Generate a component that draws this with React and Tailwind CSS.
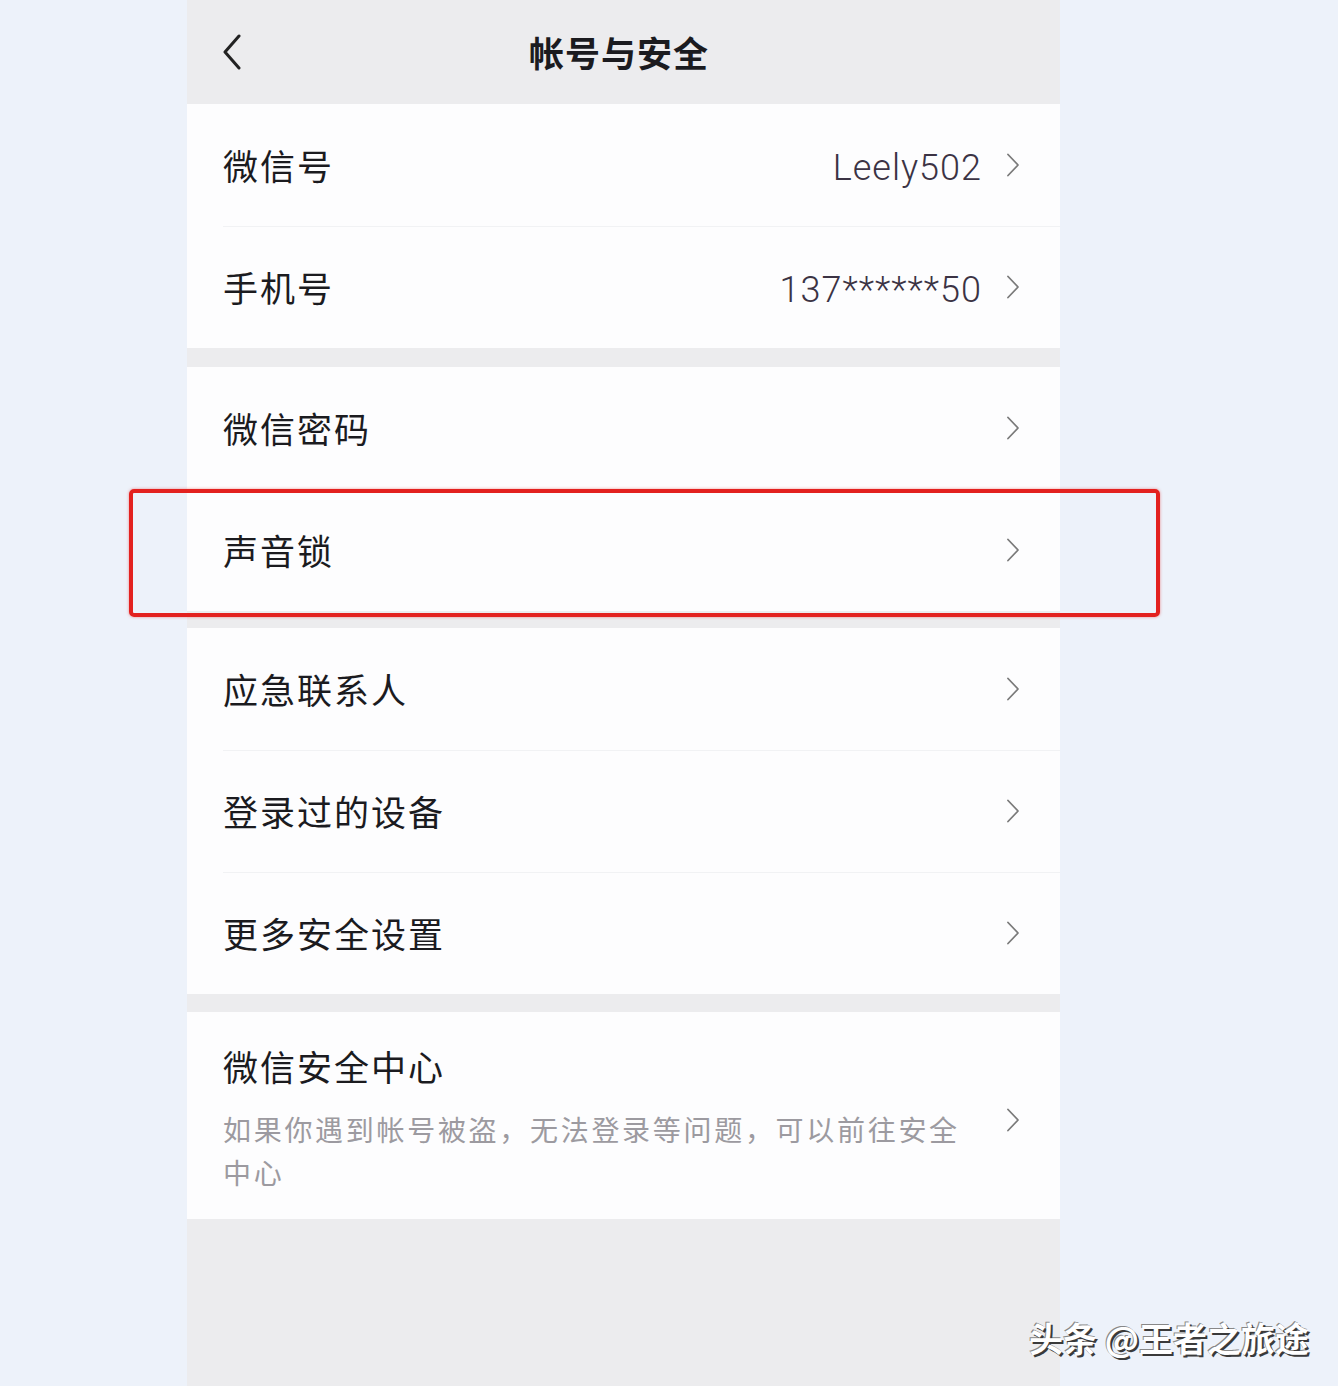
import React from "react";

const cjk = { fontFamily: '"Noto Sans CJK SC", "Noto Sans", sans-serif' };
const latin = { fontFamily: 'Roboto, "Noto Sans CJK SC", sans-serif' };

function Chevron() {
  return (
    <svg width="14" height="24" viewBox="0 0 14 24" className="shrink-0">
      <polyline points="2,1.5 12,12 2,22.5" fill="none" stroke="#7a7a7a" strokeWidth="1.8" strokeLinecap="round" strokeLinejoin="round" />
    </svg>
  );
}

function Row({ label, value, divider }) {
  return (
    <div className="relative h-[122px] flex items-center pl-[36px] pr-[40px]">
      {divider && <div className="absolute top-0 left-[36px] right-0 h-px bg-[#f1f2f4]" />}
      <div className="flex-1 text-[35px] tracking-[2px] text-[#1b1b1f]" style={cjk}>{label}</div>
      {value && (
        <div className="pt-[6px] text-[36px] font-light tracking-[1px] text-[#3b3344] mr-[24px]" style={latin}>{value}</div>
      )}
      <Chevron />
    </div>
  );
}

export default function App() {
  return (
    <div className="relative w-[1338px] h-[1386px] bg-[#edf2fa] pl-[187px] overflow-hidden">
      <div className="w-[873px] h-full bg-[#ececee] flex flex-col">
        <div className="h-[104px] flex items-center">
          <div className="w-[120px] pl-[35px]">
            <svg width="20" height="36" viewBox="0 0 20 36">
              <polyline points="17,2 3,18 17,34" fill="none" stroke="#222" strokeWidth="3" strokeLinecap="round" strokeLinejoin="round" />
            </svg>
          </div>
          <div className="flex-1 text-center text-[35px] font-bold tracking-[1px] text-[#1b1b1f] pr-[9px]" style={cjk}>帐号与安全</div>
          <div className="w-[120px]" />
        </div>

        <div className="bg-[#fdfdfe]">
          <Row label="微信号" value="Leely502" />
          <Row label="手机号" value="137******50" divider />
        </div>

        <div className="mt-[19px] bg-[#fdfdfe]">
          <Row label="微信密码" />
          <Row label="声音锁" divider />
        </div>

        <div className="mt-[17px] bg-[#fdfdfe]">
          <Row label="应急联系人" />
          <Row label="登录过的设备" divider />
          <Row label="更多安全设置" divider />
        </div>

        <div className="mt-[18px] bg-[#fdfdfe] flex items-center pl-[36px] pr-[40px] pt-[33px] pb-[25px]">
          <div className="flex-1" style={cjk}>
            <div className="text-[35px] leading-[42px] tracking-[2px] text-[#1b1b1f]">微信安全中心</div>
            <div className="mt-[21px] text-[28px] leading-[43px] tracking-[2.7px] text-[#9c9aa0]">
              如果你遇到帐号被盗，无法登录等问题，可以前往安全<br />中心
            </div>
          </div>
          <Chevron />
        </div>
      </div>

      <div className="absolute left-[129px] top-[489px] w-[1031px] h-[128px] border-[4px] border-[#e3211f] rounded-[5px] shadow-[0_0_3px_rgba(227,33,31,0.5)]" />

      <div
        className="absolute left-[1029px] top-[1312px] text-[34px] font-bold text-white [text-shadow:2px_2px_0_#3a3a3a,_-1px_-1px_0_#888]"
        style={cjk}
      >
        头条 @王者之旅途
      </div>
    </div>
  );
}
